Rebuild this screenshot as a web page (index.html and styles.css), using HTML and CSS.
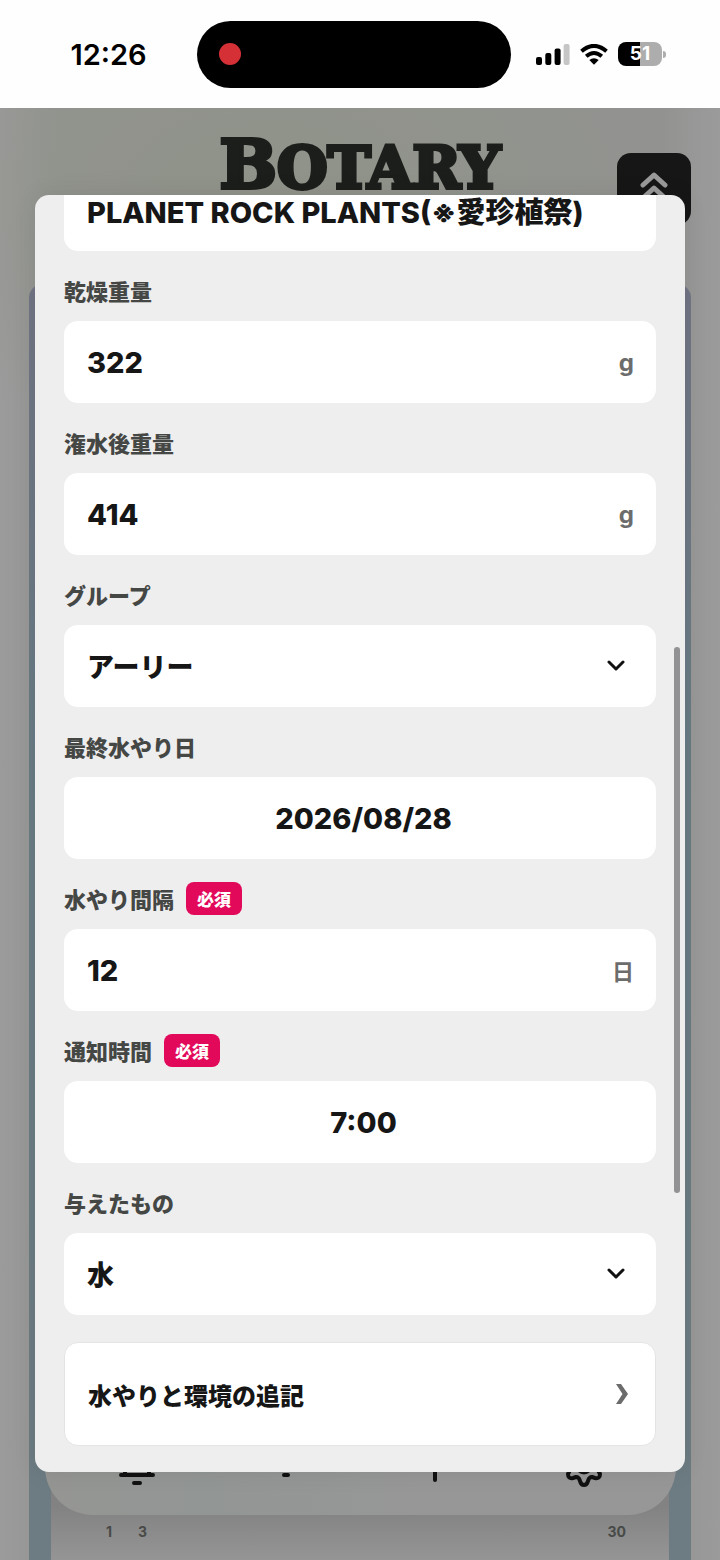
FILE: index.html
```html
<!DOCTYPE html>
<html lang="ja">
<head>
<meta charset="utf-8">
<meta name="viewport" content="width=device-width, initial-scale=1">
<title>Botary</title>
<link rel="stylesheet" href="styles.css">
</head>
<body>
<div class="screen">
  <header class="status">
    <time class="clock">12:26</time>
    <div class="island"><span class="rec"></span></div>
    <div class="indicators">
      <svg class="signal" viewBox="0 0 34 22" aria-hidden="true">
        <rect x="0" y="14" width="6" height="8" rx="2"/><rect x="9.300" y="10" width="6" height="12" rx="2"/><rect x="18.600" y="5.500" width="6" height="16.500" rx="2"/><rect x="27.600" y="1" width="6" height="21" rx="2" fill="#c6c6c6"/>
      </svg>
      <svg class="wifi" viewBox="0 0 28 21" aria-hidden="true">
        <g fill="none" stroke="#000" stroke-width="4"><path d="M1.500 7.300Q14-3.500 26.500 7.300"/><path d="M6.200 12.300Q14 5.700 21.800 12.300"/></g><path d="M9.300 16Q14 12.300 18.700 16L14 20.800Z"/>
      </svg>
      <div class="battery"><span>51</span></div>
    </div>
  </header>
  <main class="app">
    <h1 class="brand"><span>B</span>OTARY</h1>
    <button class="top-button" type="button" aria-label="上へ">
      <svg viewBox="0 0 28 32" aria-hidden="true"><path d="M3 14L14 4l11 10M3 27l11-10 11 10"/></svg>
    </button>
    <section class="card">
      <div class="days"><span>1</span><span>3</span><span class="last">30</span></div>
    </section>
    <nav class="tabs">
      <svg viewBox="0 0 40 44" aria-hidden="true"><path d="M4 31h32M8 31V9q0-6 6-6h12q6 0 6 6v22M17 39h6"/></svg>
      <svg viewBox="0 0 40 44" aria-hidden="true"><path d="M18 31h4M20 5v18"/></svg>
      <svg viewBox="0 0 40 44" aria-hidden="true"><path d="M20 6v30M5 21h30"/></svg>
      <svg viewBox="0 0 40 44" aria-hidden="true"><circle cx="20" cy="22" r="6.500"/><path d="M17 7q3-3 6 0l1 4 4 2 4-2q4 1 4 5l-2 4v6l2 4q0 5-5 4l-3-1q-3 0-4 4-1 4-4 4t-4-4q-1-4-4-4l-3 1q-5 1-5-4l2-4v-6l-2-4q0-4 4-5l4 2 4-2Z"/></svg>
    </nav>
  </main>

  <form class="modal">
    <div class="field">
      <div class="box"><input aria-label="名前" value="PLANET ROCK PLANTS(※愛珍植祭)"></div>
    </div>
    <div class="field">
      <label for="dry">乾燥重量</label>
      <div class="box"><input id="dry" inputmode="numeric" value="322"><span class="unit">g</span></div>
    </div>
    <div class="field">
      <label for="wet">潅水後重量</label>
      <div class="box"><input id="wet" inputmode="numeric" value="414"><span class="unit">g</span></div>
    </div>
    <div class="field">
      <label for="group">グループ</label>
      <div class="box">
        <select id="group"><option>アーリー</option></select>
        <svg class="chevron" viewBox="0 0 18 12" aria-hidden="true"><path d="M2 2l7 7 7-7"/></svg>
      </div>
    </div>
    <div class="field">
      <label for="date">最終水やり日</label>
      <div class="box"><input class="centered" id="date" value="2026/08/28"></div>
    </div>
    <div class="field">
      <label for="interval">水やり間隔<span class="badge">必須</span></label>
      <div class="box"><input id="interval" inputmode="numeric" value="12"><span class="unit kanji">日</span></div>
    </div>
    <div class="field">
      <label for="time">通知時間<span class="badge">必須</span></label>
      <div class="box"><input class="centered" id="time" value="7:00"></div>
    </div>
    <div class="field">
      <label for="given">与えたもの</label>
      <div class="box">
        <select id="given"><option>水</option></select>
        <svg class="chevron" viewBox="0 0 18 12" aria-hidden="true"><path d="M2 2l7 7 7-7"/></svg>
      </div>
    </div>
    <button class="more" type="button">水やりと環境の追記
      <svg viewBox="0 0 14 20" aria-hidden="true"><path d="M1 0H6L13 10 6 20H1L7.500 10Z"/></svg>
    </button>
    <span class="scrollbar"></span>
  </form>
</div>
</body>
</html>
```
FILE: styles.css
```css
* { box-sizing: border-box; }
body {
  margin: 0;
  font-family: Inter, "Noto Sans CJK JP", sans-serif;
  color: #161616;
}
button, input, select { font: inherit; color: inherit; }

.screen {
  position: relative;
  display: flex;
  flex-direction: column;
  min-height: 100vh;
  overflow: hidden;
}

.status {
  display: grid;
  grid-template-columns: 1fr 314px 1fr;
  align-items: center;
  height: 108px;
  padding-right: 12px;
  background: #fefefe;
}
.clock {
  padding-left: 20px;
  font-size: 29px;
  font-weight: 600;
  text-align: center;
  color: #000;
}
.island {
  display: flex;
  align-items: center;
  height: 67px;
  padding-left: 22px;
  border-radius: 34px;
  background: #000;
}
.rec {
  width: 22px;
  height: 22px;
  border-radius: 50%;
  background: #d53036;
}
.indicators {
  display: flex;
  align-items: center;
  gap: 10px;
  padding-left: 25px;
}
.signal { width: 34px; height: 22px; }
.wifi { width: 28px; height: 21px; }
.battery {
  position: relative;
  width: 44px;
  height: 24px;
  border-radius: 8px;
  background: linear-gradient(90deg, #000 51%, #adadad 51%);
  color: #fff;
  font-size: 19px;
  font-weight: 700;
  line-height: 24px;
  text-align: center;
}
.battery::after {
  content: "";
  position: absolute;
  top: 9px;
  right: -4px;
  width: 3px;
  height: 7px;
  border-radius: 0 3px 3px 0;
  background: #adadad;
}

.app {
  position: relative;
  flex: 1;
  display: flex;
  flex-direction: column;
  background:
    radial-gradient(ellipse 420px 260px at 38% 90px, rgba(143, 147, 134, 0.8), rgba(143, 147, 134, 0)),
    linear-gradient(90deg, #9b9b9b, #929391 8%, #929391 92%, #9b9b9b);
}
.brand {
  height: 176px;
  margin: 0;
  padding-top: 22px;
  font-family: "DejaVu Serif", serif;
  font-size: 58px;
  font-weight: 700;
  line-height: 68px;
  text-align: center;
  color: #1c1e1b;
  -webkit-text-stroke: 4px #1c1e1b;
}
.brand span { font-size: 68px; }
.top-button {
  position: absolute;
  top: 45px;
  right: 29px;
  width: 74px;
  height: 72px;
  padding: 0;
  border: 0;
  border-radius: 14px;
  background: #161616;
}
.top-button svg {
  width: 28px;
  height: 32px;
  fill: none;
  stroke: #9a9a9a;
  stroke-width: 5;
  stroke-linecap: round;
  stroke-linejoin: round;
}
.card {
  flex: 1;
  display: flex;
  align-items: flex-end;
  margin: 0 29px;
  padding: 0 22px;
  border-radius: 14px 14px 0 0;
  background: linear-gradient(#717484, #687b84 35%, #6d7c82);
}
.days {
  flex: 1;
  display: flex;
  align-items: flex-end;
  gap: 26px;
  height: 180px;
  padding: 0 43px 20px 55px;
  background: linear-gradient(#828282 70%, #959595);
  font-size: 14px;
  font-weight: 700;
  line-height: 16px;
  color: #484a48;
}
.last { margin-left: auto; }
.tabs {
  position: absolute;
  left: 45px;
  right: 44px;
  bottom: 45px;
  display: flex;
  align-items: flex-end;
  justify-content: space-around;
  height: 110px;
  padding: 0 18px 27px;
  border-radius: 48px;
  background: linear-gradient(90deg, #959693, #929695 25%, #979797 60%);
}
.tabs svg {
  width: 40px;
  height: 44px;
  fill: none;
  stroke: #111;
  stroke-width: 4;
  stroke-linecap: round;
  stroke-linejoin: round;
}

.modal {
  position: absolute;
  inset: 195px 35px 88px;
  display: flex;
  flex-direction: column;
  justify-content: flex-end;
  padding: 0 29px 26px;
  overflow: hidden;
  border-radius: 14px;
  background: #eee;
  box-shadow: 0 0 24px rgba(0, 0, 0, 0.08);
}
.field { flex: none; }
.field label {
  display: flex;
  align-items: center;
  gap: 12px;
  height: 70px;
  padding: 23px 0 14px;
  font-family: "Noto Sans CJK JP", sans-serif;
  font-size: 22px;
  font-weight: 900;
  line-height: 33px;
  color: #454745;
}
.badge {
  padding: 0 11px;
  border-radius: 8px;
  background: #e2085a;
  color: #fff;
  font-size: 17px;
}
.box {
  position: relative;
  display: flex;
  align-items: center;
  height: 82px;
  border-radius: 14px;
  background: #fff;
}
.box input, .box select {
  flex: 1;
  min-width: 0;
  height: 82px;
  padding: 0 23px;
  border: 0;
  outline: 0;
  appearance: none;
  background: transparent;
  font-size: 29px;
  font-weight: 800;
}
.box select {
  padding-top: 2px;
  font-size: 27px;
}
.box .centered { padding-right: 16px; text-align: center; }
.unit {
  padding-right: 22px;
  font-size: 24px;
  font-weight: 700;
  color: #6c6c6c;
}
.kanji {
  font-family: "Noto Sans CJK JP", sans-serif;
  font-size: 22px;
  line-height: 33px;
}
.chevron {
  position: absolute;
  right: 31px;
  width: 18px;
  height: 12px;
  fill: none;
  stroke: #111;
  stroke-width: 3;
  stroke-linecap: round;
  stroke-linejoin: round;
  pointer-events: none;
}
.more {
  flex: none;
  display: flex;
  align-items: center;
  justify-content: space-between;
  height: 104px;
  margin-top: 27px;
  padding: 0 26px 0 23px;
  border: 1px solid #e4e4e4;
  border-radius: 14px;
  background: #fff;
  font-family: "Noto Sans CJK JP", sans-serif;
  font-size: 24px;
  font-weight: 900;
}
.more svg { width: 14px; height: 20px; fill: #6c6c6c; }
.scrollbar {
  position: absolute;
  top: 452px;
  right: 5px;
  width: 6px;
  height: 546px;
  border-radius: 3px;
  background: #929294;
}
```
